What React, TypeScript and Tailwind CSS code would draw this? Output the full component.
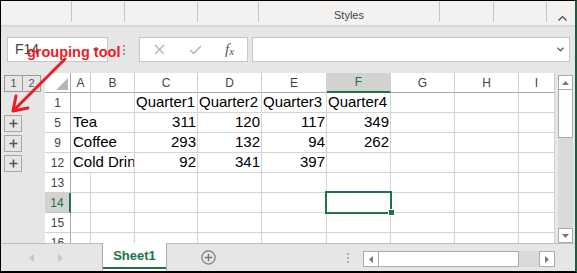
import React from 'react';

const COLS = [
  { key: 'A', w: 'w-[20px]' },
  { key: 'B', w: 'w-[44px]' },
  { key: 'C', w: 'w-[63px]' },
  { key: 'D', w: 'w-[64px]' },
  { key: 'E', w: 'w-[65px]' },
  { key: 'F', w: 'w-[64px]' },
  { key: 'G', w: 'w-[64px]' },
  { key: 'H', w: 'w-[64px]' },
  { key: 'I', w: 'w-[36px]' },
];

type Row = { n: string; label?: string; cells: string[]; text?: boolean };

const ROWS: Row[] = [
  { n: '1', cells: ['Quarter1', 'Quarter2', 'Quarter3', 'Quarter4'], text: true },
  { n: '5', label: 'Tea', cells: ['311', '120', '117', '349'] },
  { n: '9', label: 'Coffee', cells: ['293', '132', '94', '262'] },
  { n: '12', label: 'Cold Drink', cells: ['92', '341', '397', ''] },
  { n: '13', cells: [] },
  { n: '14', cells: [] },
  { n: '15', cells: [] },
  { n: '16', cells: [] },
];

const cellCls = 'shrink-0 border-r border-b border-[#d4d4d4] flex items-center text-[15px] text-black whitespace-nowrap overflow-hidden';

const Ribbon = () => (
  <div className="h-[24px] shrink-0 bg-[#f3f2f1] flex items-start">
    <div className="w-[71px] h-[21px] border-r border-[#c8c6c4]" />
    <div className="w-[53px] h-[21px] border-r border-[#c8c6c4]" />
    <div className="w-[73px] h-[21px] border-r border-[#c8c6c4]" />
    <div className="w-[61px] h-[21px] border-r border-[#c8c6c4]" />
    <div className="w-[181px] h-[21px] border-r border-[#c8c6c4] flex items-end justify-center pb-[1px] text-[11px] leading-none text-[#444]">
      Styles
    </div>
    <div className="w-[54px] h-[21px] border-r border-[#c8c6c4]" />
    <div className="w-[53px] h-[21px] border-r border-[#c8c6c4]" />
    <div className="flex-1 h-full flex items-end justify-end pr-[8px] pb-[4px]">
      <svg width="9" height="6" viewBox="0 0 9 6">
        <polyline points="0.5,5.5 4.5,1.5 8.5,5.5" fill="none" stroke="#444" strokeWidth="1.2" />
      </svg>
    </div>
  </div>
);

const FormulaBar = () => (
  <div className="h-[45px] shrink-0 flex items-start pt-[9px] pl-[6px]">
    <div className="w-[101px] h-[25px] bg-white border border-[#c6c6c6] flex items-center justify-between pl-[7px] pr-[8px] text-[14px] text-[#444]">
      <span>F14</span>
      <svg width="6" height="4" viewBox="0 0 6 4">
        <polygon points="0,0 6,0 3,4" fill="#7a7a7a" />
      </svg>
    </div>
    <div className="w-[31px] h-[25px] flex flex-col items-center justify-center gap-[2px]">
      <div className="w-[2px] h-[2px] bg-[#9a9a9a]" />
      <div className="w-[2px] h-[2px] bg-[#9a9a9a]" />
      <div className="w-[2px] h-[2px] bg-[#9a9a9a]" />
    </div>
    <div className="w-[109px] h-[25px] bg-white border border-[#c6c6c6] flex items-center">
      <div className="w-[38px] flex justify-center">
        <svg width="11" height="11" viewBox="0 0 11 11">
          <path d="M1 1 L10 10 M10 1 L1 10" stroke="#b4b4b4" strokeWidth="1.3" />
        </svg>
      </div>
      <div className="w-[34px] flex justify-center">
        <svg width="13" height="10" viewBox="0 0 13 10">
          <polyline points="1,5 4.5,8.5 12,1" fill="none" stroke="#b4b4b4" strokeWidth="1.5" />
        </svg>
      </div>
      <div className="w-[35px] flex justify-center font-['Liberation_Serif',serif] italic text-[15px] leading-none text-[#555]">
        f<span className="text-[11px] mt-[4px]">x</span>
      </div>
    </div>
    <div className="ml-[4px] w-[318px] h-[25px] bg-white border border-[#c6c6c6] flex items-center justify-end pr-[5px]">
      <svg width="7" height="5" viewBox="0 0 7 5">
        <polyline points="0.5,0.8 3.5,3.8 6.5,0.8" fill="none" stroke="#666" strokeWidth="1.4" />
      </svg>
    </div>
  </div>
);

const PlusBox = () => (
  <div className="ml-[3px] w-[18px] h-[17px] border border-[#a6a6a6] flex items-center justify-center">
    <svg width="9" height="9" viewBox="0 0 9 9">
      <path d="M4.5 0.5 V8.5 M0.5 4.5 H8.5" stroke="#555" strokeWidth="1.6" />
    </svg>
  </div>
);

const OutlinePane = () => (
  <div className="w-[44px] shrink-0 flex flex-col">
    <div className="h-[20px] flex items-center pl-[3px]">
      <div className="w-[19px] h-[17px] border border-[#9a9a9a] flex items-center justify-center text-[11px] text-[#555]">1</div>
      <div className="-ml-px w-[19px] h-[17px] border border-[#9a9a9a] flex items-center justify-center text-[11px] text-[#555]">2</div>
    </div>
    <div className="h-[20px]" />
    <div className="h-[20px] flex items-center"><PlusBox /></div>
    <div className="h-[20px] flex items-center"><PlusBox /></div>
    <div className="h-[20px] flex items-center"><PlusBox /></div>
  </div>
);

const HeaderRow = () => (
  <div className="flex h-[20px] shrink-0">
    <div className="w-[26px] shrink-0 border-r border-b border-[#ababab] flex items-end justify-end pr-[2px] pb-[2px]">
      <svg width="12" height="12" viewBox="0 0 12 12">
        <polygon points="12,0 12,12 0,12" fill="#b7b7b7" />
      </svg>
    </div>
    {COLS.map((c) => {
      const active = c.key === 'F';
      return (
        <div
          key={c.key}
          className={`${c.w} shrink-0 border-r border-r-[#cfcfcf] flex items-center justify-center text-[12px] ${
            active
              ? 'bg-[#d2d2d2] border-b-2 border-b-[#217346] text-[#217346]'
              : 'border-b border-b-[#ababab] text-[#444]'
          }`}
        >
          {c.key}
        </div>
      );
    })}
  </div>
);

const DataRow = ({ row }: { row: Row }) => {
  const active = row.n === '14';
  return (
    <div className="flex h-[20px] shrink-0">
      <div
        className={`w-[26px] shrink-0 border-b flex items-center justify-center text-[12px] ${
          active
            ? 'bg-[#d2d2d2] text-[#217346] border-r-2 border-r-[#217346] border-b-[#c4c4c4]'
            : 'border-r border-r-[#ababab] border-b-[#d0d0d0] text-[#444]'
        }`}
      >
        {row.n}
      </div>
      {row.label ? (
        <div className={`w-[64px] pl-[2px] ${cellCls}`}>{row.label}</div>
      ) : (
        <>
          <div className={`w-[20px] ${cellCls}`} />
          <div className={`w-[44px] ${cellCls}`} />
        </>
      )}
      {COLS.slice(2).map((c, i) => {
        const v = row.cells[i] ?? '';
        const sel = active && c.key === 'F';
        return (
          <div
            key={c.key}
            className={`${c.w} ${cellCls} ${row.text ? 'pl-[1px]' : 'justify-end pr-[1px]'} ${sel ? 'relative z-10 overflow-visible' : ''}`}
          >
            {v}
            {sel && (
              <>
                <div className="absolute left-[-2px] top-[-2px] w-[67px] h-[23px] border-2 border-[#217346]" />
                <div className="absolute left-[61px] top-[16px] w-[7px] h-[7px] bg-[#217346] border border-white" />
              </>
            )}
          </div>
        );
      })}
    </div>
  );
};

const Grid = () => (
  <div className="w-[510px] shrink-0 overflow-hidden bg-white flex flex-col">
    <HeaderRow />
    {ROWS.map((r) => (
      <DataRow key={r.n} row={r} />
    ))}
  </div>
);

const VScroll = () => (
  <div className="w-[20px] shrink-0 flex flex-col pt-[2px] pl-[3px] pr-[2px]">
    <div className="w-[15px] h-[15px] bg-white border border-[#ababab] flex items-center justify-center">
      <svg width="7" height="4" viewBox="0 0 7 4"><polygon points="0,4 7,4 3.5,0" fill="#777" /></svg>
    </div>
    <div className="flex-1 bg-[#dadada] flex flex-col">
      <div className="-mt-px h-[49px] bg-white border border-[#ababab]" />
    </div>
    <div className="w-[15px] h-[15px] bg-white border border-[#ababab] flex items-center justify-center">
      <svg width="7" height="4" viewBox="0 0 7 4"><polygon points="0,0 7,0 3.5,4" fill="#777" /></svg>
    </div>
  </div>
);

const TabBar = () => (
  <div className="h-[28px] shrink-0 flex border-t border-[#bdbdbd]">
    <div className="w-[101px] flex items-center pl-[28px]">
      <svg width="5" height="8" viewBox="0 0 5 8"><polygon points="5,0 5,8 0,4" fill="#c8c8c8" /></svg>
      <svg className="ml-[24px]" width="5" height="8" viewBox="0 0 5 8"><polygon points="0,0 0,8 5,4" fill="#c8c8c8" /></svg>
    </div>
    <div className="-mt-px w-[65px] h-[28px] bg-white border-x border-[#ababab] flex flex-col">
      <div className="flex-1 flex items-center justify-center pt-[2px] text-[13px] font-bold text-[#217346]">Sheet1</div>
      <div className="h-[2px] mb-[2px] bg-[#217346]" />
    </div>
    <div className="w-[196px] flex items-center">
      <svg className="ml-[34px]" width="15" height="15" viewBox="0 0 15 15">
        <circle cx="7.5" cy="7.5" r="6.6" fill="none" stroke="#777" strokeWidth="1.2" />
        <path d="M7.5 3.8 V11.2 M3.8 7.5 H11.2" stroke="#777" strokeWidth="1.4" />
      </svg>
      <div className="ml-[131px] flex flex-col gap-[2px]">
        <div className="w-[2px] h-[2px] bg-[#b0b0b0]" />
        <div className="w-[2px] h-[2px] bg-[#b0b0b0]" />
        <div className="w-[2px] h-[2px] bg-[#b0b0b0]" />
      </div>
    </div>
    <div className="mt-[7px] w-[192px] h-[16px] flex">
      <div className="w-[16px] h-[16px] bg-white border border-[#ababab] flex items-center justify-center">
        <svg width="4" height="7" viewBox="0 0 4 7"><polygon points="4,0 4,7 0,3.5" fill="#777" /></svg>
      </div>
      <div className="-ml-px w-[141px] h-[16px] bg-white border border-[#ababab]" />
      <div className="flex-1 h-[16px] bg-[#dadada]" />
      <div className="w-[16px] h-[16px] bg-white border border-[#ababab] flex items-center justify-center">
        <svg width="4" height="7" viewBox="0 0 4 7"><polygon points="0,0 0,7 4,3.5" fill="#777" /></svg>
      </div>
    </div>
  </div>
);

export default function App() {
  return (
    <div className="relative w-[577px] h-[273px] overflow-hidden flex flex-col bg-[#e6e6e6] border-t border-l border-black border-r-2 border-r-[#1d5e3a] border-b-2 border-b-black font-['Liberation_Sans',Arial,sans-serif]">
      <Ribbon />
      <div className="h-[3px] shrink-0 bg-linear-to-b from-[#cfcfcf] to-[#e6e6e6]" />
      <FormulaBar />
      <div className="flex h-[170px] shrink-0">
        <OutlinePane />
        <Grid />
        <VScroll />
      </div>
      <TabBar />

      {/* annotation */}
      <div className="absolute left-[26px] top-[44px] text-[14.5px] font-bold leading-none text-[#ed1c24] whitespace-nowrap">
        grouping tool
      </div>
      <svg className="absolute left-0 top-0 pointer-events-none" width="80" height="120" viewBox="0 0 80 120">
        <line x1="64" y1="58" x2="13" y2="109" stroke="#ed1c24" strokeWidth="3" strokeLinecap="round" />
        <polyline points="27,107 12,110 15,95" fill="none" stroke="#ed1c24" strokeWidth="3" strokeLinecap="round" strokeLinejoin="round" />
      </svg>
    </div>
  );
}
